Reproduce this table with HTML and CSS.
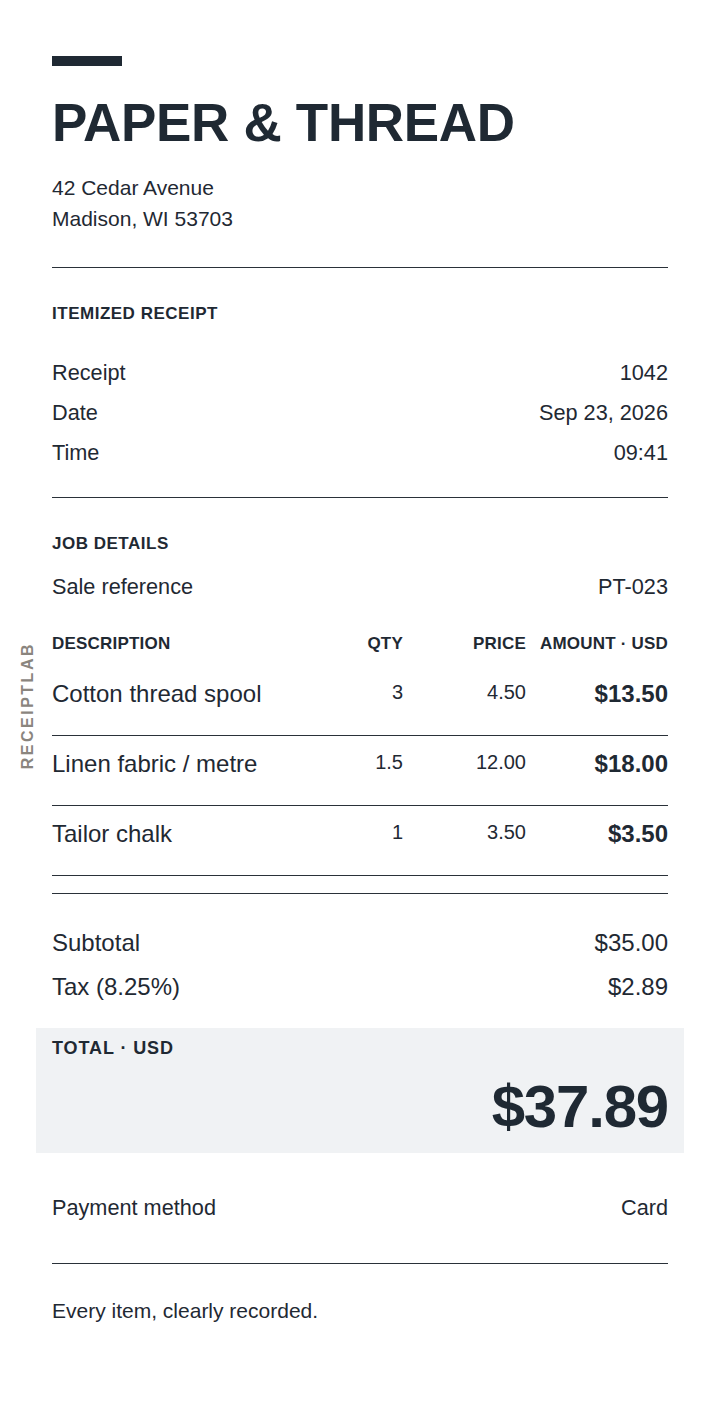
FILE: index.html
```html
<!DOCTYPE html>
<html lang="en">
<head>
<meta charset="utf-8">
<title>Paper &amp; Thread — Itemized Receipt</title>
<link rel="stylesheet" href="styles.css">
</head>
<body>
<main class="page">
  <div class="side-brand">RECEIPTLAB</div>

  <header class="head">
    <div class="bar"></div>
    <h1 class="title">PAPER &amp; THREAD</h1>
    <div class="address">
      <div>42 Cedar Avenue</div>
      <div>Madison, WI 53703</div>
    </div>
  </header>

  <hr class="rule rule-head">

  <section class="meta">
    <h2 class="label label-first">ITEMIZED RECEIPT</h2>
    <div class="kv"><span>Receipt</span><span>1042</span></div>
    <div class="kv"><span>Date</span><span>Sep 23, 2026</span></div>
    <div class="kv"><span>Time</span><span>09:41</span></div>
  </section>

  <hr class="rule rule-meta">

  <section class="job">
    <h2 class="label">JOB DETAILS</h2>
    <div class="kv kv-job"><span>Sale reference</span><span>PT-023</span></div>
  </section>

  <section class="items">
    <div class="thead">
      <span class="c-desc">DESCRIPTION</span>
      <span class="c-num">QTY</span>
      <span class="c-num">PRICE</span>
      <span class="c-num">AMOUNT · USD</span>
    </div>
    <div class="item">
      <span class="c-desc desc">Cotton thread spool</span>
      <span class="c-num small">3</span>
      <span class="c-num small">4.50</span>
      <span class="c-num amt">$13.50</span>
    </div>
    <div class="item">
      <span class="c-desc desc">Linen fabric / metre</span>
      <span class="c-num small">1.5</span>
      <span class="c-num small">12.00</span>
      <span class="c-num amt">$18.00</span>
    </div>
    <div class="item">
      <span class="c-desc desc">Tailor chalk</span>
      <span class="c-num small">1</span>
      <span class="c-num small">3.50</span>
      <span class="c-num amt">$3.50</span>
    </div>
  </section>

  <section class="sums">
    <div class="kv kv-sum"><span>Subtotal</span><span>$35.00</span></div>
    <div class="kv kv-sum"><span>Tax (8.25%)</span><span>$2.89</span></div>
  </section>

  <section class="total">
    <div class="total-label">TOTAL · USD</div>
    <div class="total-amount">$37.89</div>
  </section>

  <div class="kv kv-pay"><span>Payment method</span><span>Card</span></div>

  <hr class="rule rule-pay">

  <p class="footer">Every item, clearly recorded.</p>
</main>
</body>
</html>
```

FILE: styles.css
```css
* { box-sizing: border-box; }

html, body {
  margin: 0;
  padding: 0;
  background: #ffffff;
}

body {
  font-family: "Liberation Sans", Arial, sans-serif;
  color: #1f2933;
}

.page {
  position: relative;
  padding: 56px 52px 60px;
}

.side-brand {
  position: absolute;
  left: 19px;
  top: 642px;
  writing-mode: vertical-rl;
  transform: rotate(180deg);
  font-size: 16px;
  font-weight: 700;
  letter-spacing: 2.5px;
  color: #8a857e;
  line-height: 18px;
}

.bar {
  width: 70px;
  height: 10px;
  background: #1f2933;
}

.title {
  margin: 28px 0 0;
  font-size: 53px;
  line-height: 58px;
  font-weight: 700;
  letter-spacing: -0.006em;
}

.address {
  margin-top: 20px;
  font-size: 21px;
  line-height: 31px;
}

.rule {
  border: 0;
  border-top: 1px solid #2a3139;
  margin: 0;
  height: 0;
}

.rule-head { margin-top: 33px; }

.label {
  margin: 36px 0 0;
  font-size: 17px;
  line-height: 20px;
  font-weight: 700;
  letter-spacing: 0.03em;
}

.kv {
  display: flex;
  justify-content: space-between;
  align-items: center;
  font-size: 21.7px;
  line-height: 40px;
}

.label-first { margin-bottom: 29px; }

.rule-meta { margin-top: 24px; }

.kv-job { margin-top: 13px; }

.thead {
  display: grid;
  grid-template-columns: 1fr 90px 123px 142px;
  margin-top: 27px;
  margin-bottom: 12px;
  font-size: 17px;
  line-height: 20px;
  font-weight: 700;
  letter-spacing: 0.012em;
}

.c-desc { text-align: left; }
.c-num { text-align: right; }

.item {
  display: grid;
  grid-template-columns: 1fr 90px 123px 142px;
  align-items: start;
  padding: 14px 0 27px;
  border-bottom: 1px solid #2a3139;
}

.desc {
  font-size: 24px;
  line-height: 28px;
}

.small {
  font-size: 20px;
  line-height: 24px;
}

.amt {
  font-size: 24px;
  line-height: 28px;
  font-weight: 700;
}

.sums {
  margin-top: 17px;
  border-top: 1px solid #2a3139;
  padding-top: 27px;
}

.kv-sum {
  font-size: 24px;
  line-height: 44px;
}

.total {
  margin: 19px -16px 0;
  padding: 10px 16px 16px;
  background: #f0f2f4;
}

.total-label {
  font-size: 18px;
  line-height: 20px;
  font-weight: 700;
  letter-spacing: 0.05em;
}

.total-amount {
  margin-top: 19px;
  text-align: right;
  font-size: 60px;
  line-height: 60px;
  font-weight: 700;
  letter-spacing: -0.02em;
}

.kv-pay { margin-top: 35px; }

.rule-pay { margin-top: 35px; }

.footer {
  margin: 32px 0 0;
  font-size: 21px;
  line-height: 30px;
}
```
